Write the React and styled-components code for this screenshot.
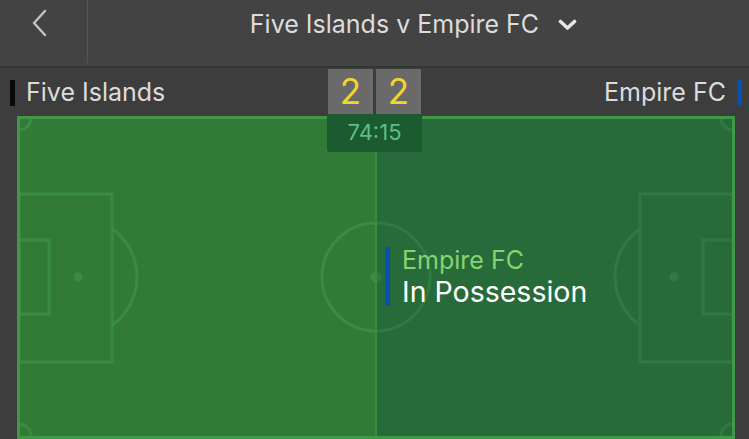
import React from "react";
import styled, { createGlobalStyle } from "styled-components";

const Global = createGlobalStyle`
  html, body { margin: 0; padding: 0; background: #3d3d3d; overflow: hidden; }
  * { box-sizing: border-box; }
`;

const FONT = `"Inter", "Open Sans", "Liberation Sans", sans-serif`;

const Screen = styled.div`
  width: 749px;
  height: 439px;
  display: flex;
  flex-direction: column;
  background: #3d3d3d;
  font-family: ${FONT};
  overflow: hidden;
`;

const NavBar = styled.header`
  height: 68px;
  flex: none;
  display: flex;
  background: #434343;
  border-bottom: 2px solid #363636;
`;

const BackButton = styled.button`
  width: 88px;
  height: 63px;
  border: 0;
  border-right: 1px solid #565656;
  background: transparent;
  display: flex;
  justify-content: center;
  align-items: flex-start;
  padding: 9px 8px 0 0;
  cursor: pointer;
`;

const TitleButton = styled.button`
  flex: 1;
  border: 0;
  background: transparent;
  display: flex;
  justify-content: center;
  align-items: flex-start;
  gap: 19px;
  padding: 9px 10px 0 0;
  color: #dcdcdc;
  font-family: ${FONT};
  font-size: 25px;
  line-height: 30px;
  cursor: pointer;
`;

const Chevron = styled.svg`
  margin-top: 10px;
`;

const ScoreRow = styled.div`
  height: 48px;
  flex: none;
  display: grid;
  grid-template-columns: 1fr auto 1fr;
  align-items: center;
  background: #3d3d3d;
  position: relative;
  z-index: 2;
`;

const Team = styled.div`
  display: flex;
  align-items: center;
  justify-content: ${(p) => (p.$right ? "flex-end" : "flex-start")};
  gap: 11px;
  padding: ${(p) => (p.$right ? "0 7px 0 0" : "0 0 0 10px")};
  color: #dcdcdc;
  font-size: 25px;
  line-height: 30px;
`;

const TeamBar = styled.span`
  width: 5px;
  height: 26px;
  background: ${(p) => p.$color};
  margin-top: 2px;
`;

const ScoreGroup = styled.div`
  position: relative;
  display: flex;
  gap: 3px;
  align-self: start;
  margin-top: 1px;
`;

const ScoreBox = styled.div`
  width: 45px;
  height: 45px;
  background: #6a6a6a;
  color: #f4d42e;
  font-size: 35px;
  line-height: 45px;
  text-align: center;
`;

const Clock = styled.div`
  position: absolute;
  top: 100%;
  left: -1px;
  right: -1px;
  height: 38px;
  background: #1c5a30;
  color: #5cbf86;
  font-size: 22px;
  line-height: 36px;
  text-align: center;
  border-radius: 0 0 3px 3px;
`;

const PitchArea = styled.div`
  position: relative;
  height: 323px;
  margin: 0 14px 0 17px;
  flex: none;
`;

const PitchSvg = styled.svg`
  display: block;
`;

const Possession = styled.div`
  position: absolute;
  left: 368px;
  top: 131px;
  display: flex;
  align-items: flex-start;
  gap: 12px;
`;

const PossessionBar = styled.span`
  width: 5px;
  height: 59px;
  background: #0b4fb3;
`;

const PossessionText = styled.div`
  display: flex;
  flex-direction: column;
  margin-top: -2px;
`;

const PossessionTeam = styled.span`
  color: #86d46f;
  font-size: 25px;
  line-height: 30px;
`;

const PossessionLabel = styled.span`
  color: #ffffff;
  font-size: 28.5px;
  line-height: 34px;
`;

function PitchMarkings({ stroke, side }) {
  // mirror helper for the right half
  const W = 718;
  const mx = (x) => (side === "right" ? W - x : x);
  const boxX = side === "right" ? W - 95 : 2;
  const goalX = side === "right" ? W - 32 : 2;
  const spot = mx(61);
  const arcTop = 161 - 48.2;
  const arcBot = 161 + 48.2;
  const arc =
    side === "right"
      ? `M ${W - 95} ${arcTop} A 59 59 0 0 0 ${W - 95} ${arcBot}`
      : `M 95 ${arcTop} A 59 59 0 0 1 95 ${arcBot}`;
  return (
    <g stroke={stroke} strokeWidth="3" fill="none">
      <rect x={boxX} y="78" width="93" height="168" />
      <rect x={goalX} y="124" width="30" height="74" />
      <path d={arc} />
      <circle cx={spot} cy="161" r="4.5" fill={stroke} stroke="none" />
      {side === "left" ? (
        <>
          <path d="M 2 14 A 12 12 0 0 0 14 2" />
          <path d="M 2 308 A 12 12 0 0 1 14 320" />
        </>
      ) : (
        <>
          <path d={`M ${W - 14} 2 A 12 12 0 0 0 ${W - 2} 14`} />
          <path d={`M ${W - 2} 308 A 12 12 0 0 0 ${W - 14} 320`} />
        </>
      )}
    </g>
  );
}

function Pitch() {
  return (
    <PitchSvg width="718" height="323" viewBox="0 0 718 323">
      <rect x="0" y="0" width="359" height="323" fill="#317b37" />
      <rect x="359" y="0" width="359" height="323" fill="#286b3b" />
      <PitchMarkings stroke="#3b8c43" side="left" />
      <PitchMarkings stroke="#2f7a41" side="right" />
      <path d="M 359 107 A 54 54 0 0 0 359 215" stroke="#3b8c43" strokeWidth="3" fill="none" />
      <path d="M 359 107 A 54 54 0 0 1 359 215" stroke="#2f7a41" strokeWidth="3" fill="none" />
      <path d="M 359 155.5 A 5.5 5.5 0 0 0 359 166.5 Z" fill="#3b8c43" />
      <path d="M 359 155.5 A 5.5 5.5 0 0 1 359 166.5 Z" fill="#2f7a41" />
      <line x1="359" y1="0" x2="359" y2="323" stroke="#3a8a42" strokeWidth="2" />
      <rect x="1.5" y="1.5" width="715" height="320" stroke="#3f9a48" strokeWidth="3" fill="none" />
    </PitchSvg>
  );
}

export default function App() {
  return (
    <>
      <Global />
      <Screen>
        <NavBar>
          <BackButton aria-label="Back">
            <svg width="18" height="28" viewBox="0 0 18 28">
              <path d="M 14 2 L 3 14 L 14 26" stroke="#c4c4c4" strokeWidth="2.4" fill="none" strokeLinecap="round" strokeLinejoin="round" />
            </svg>
          </BackButton>
          <TitleButton>
            <span>Five Islands v Empire FC</span>
            <Chevron width="19" height="12" viewBox="0 0 19 12">
              <path d="M 2.5 2.5 L 9.5 9 L 16.5 2.5" stroke="#e6e6e6" strokeWidth="3.6" fill="none" strokeLinecap="round" strokeLinejoin="round" />
            </Chevron>
          </TitleButton>
        </NavBar>
        <ScoreRow>
          <Team>
            <TeamBar $color="#0a0a0a" />
            <span>Five Islands</span>
          </Team>
          <ScoreGroup>
            <ScoreBox>2</ScoreBox>
            <ScoreBox>2</ScoreBox>
            <Clock>74:15</Clock>
          </ScoreGroup>
          <Team $right>
            <span>Empire FC</span>
            <TeamBar $color="#0b4fb3" />
          </Team>
        </ScoreRow>
        <PitchArea>
          <Pitch />
          <Possession>
            <PossessionBar />
            <PossessionText>
              <PossessionTeam>Empire FC</PossessionTeam>
              <PossessionLabel>In Possession</PossessionLabel>
            </PossessionText>
          </Possession>
        </PitchArea>
      </Screen>
    </>
  );
}
